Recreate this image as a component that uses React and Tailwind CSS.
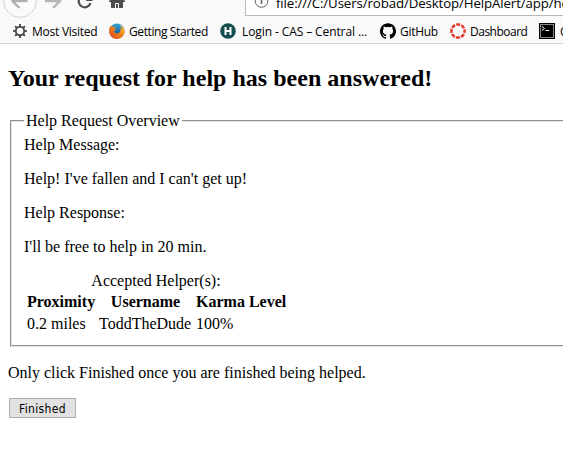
import { SiGithub } from 'react-icons/si';

function GearIcon() {
  return (
    <svg className="h-4 w-4 shrink-0" viewBox="0 0 16 16" fill="none" stroke="#4c4c4c">
      <circle cx="8" cy="8" r="4.2" strokeWidth="1.9" />
      {[0, 45, 90, 135, 180, 225, 270, 315].map((a) => (
        <path key={a} d="M8 1.1V3.8" strokeWidth="1.9" transform={`rotate(${a} 8 8)`} />
      ))}
    </svg>
  );
}

function FirefoxIcon() {
  return (
    <svg className="h-4 w-4 shrink-0" viewBox="0 0 16 16">
      <defs>
        <linearGradient id="fox" x1="0" y1="1" x2="1" y2="0">
          <stop offset="0" stopColor="#d9431e" />
          <stop offset="0.55" stopColor="#f0821c" />
          <stop offset="1" stopColor="#ffd23c" />
        </linearGradient>
        <linearGradient id="globe" x1="0" y1="0" x2="0" y2="1">
          <stop offset="0" stopColor="#2fa4dc" />
          <stop offset="1" stopColor="#173f80" />
        </linearGradient>
      </defs>
      <circle cx="8" cy="8" r="7.6" fill="url(#globe)" />
      <path d="M1 3C2 3 3 3.4 3.8 4C5 3.6 6 3.9 6.7 4.2L5.6 5.6L7 6.3L5.3 7.5C5 9.3 6.4 10.7 8.5 10.4C11 10 12 8 11.2 5.6C12.1 6 12.4 6.8 12.6 7.4C12.8 5 12 3.5 10.6 2C14 3 15.8 5.8 15.7 8.6C15.5 12.7 12.2 15.9 8 15.9C3.6 15.9.2 12.6.2 8.4C.2 6 .6 4.6 1 3Z" fill="url(#fox)" />
    </svg>
  );
}

function LoginIcon() {
  return (
    <svg className="h-4 w-4 shrink-0" viewBox="0 0 16 16">
      <circle cx="8" cy="8" r="7.8" fill="#174f50" />
      <path d="M5.5 4V12M10.5 4V12M5.5 8H10.5" stroke="white" strokeWidth="2" />
    </svg>
  );
}

function DashboardIcon() {
  return (
    <svg className="h-4 w-4 shrink-0" viewBox="0 0 16 16" fill="none">
      <circle cx="8" cy="8" r="6.6" stroke="#e5382e" strokeWidth="2.5" strokeDasharray="4 1.184" strokeDashoffset="2" />
    </svg>
  );
}

function TerminalIcon() {
  return (
    <svg className="h-4 w-4 shrink-0" viewBox="0 0 16 16" fill="none">
      <rect width="16" height="16" fill="black" />
      <rect x="1.5" y="1.5" width="13" height="13" stroke="#888" />
      <path d="M3 3.5L5.5 5.5L3 7.5M6.5 7.5H10" stroke="white" />
    </svg>
  );
}

function NavIcons() {
  return (
    <svg className="h-[18px] w-[130px] shrink-0" viewBox="0 0 130 18" fill="none">
      <circle cx="20" cy="1" r="16.3" fill="#fbfbfb" stroke="#d2d2d2" />
      <path d="M12.5 1H27.5M19.5 -6L12.5 1L19.5 8" stroke="#b0b0b0" strokeWidth="2.4" />
      <path d="M45 1H60M53 -6L60 1L53 8" stroke="#b5b5b5" strokeWidth="2.4" />
      <path d="M90.5 3A6 6 0 1 1 89 -3" stroke="#4c4c4c" strokeWidth="2.2" />
      <path d="M85.5 1H92.5V-5Z" fill="#4c4c4c" />
      <path d="M109 1L117 -7L125 1V2H123V8H119V3H115V8H111V2H109Z" fill="#4c4c4c" />
      <path d="M116 4H118V8H116Z" fill="#4c4c4c" />
    </svg>
  );
}

function Bookmark({ icon, label, className, text }) {
  return (
    <div className={`flex shrink-0 items-center gap-1 ${className}`}>
      {icon}
      <span className={`whitespace-nowrap pt-0.5 ${text}`}>{label}</span>
    </div>
  );
}

function BrowserChrome() {
  return (
    <header className="h-[44px] overflow-hidden border-b border-[#d9d9d9] bg-[#f9f9f9] font-['Open_Sans','Noto_Sans',sans-serif] text-[12px] leading-4 text-black">
      <div className="flex h-[18px] items-start justify-between overflow-hidden">
        <NavIcons />
        <div className="flex h-4 w-[318px] shrink-0 items-start overflow-hidden border-b border-l border-[#b9b9b9] bg-white">
          <svg className="ml-[7px] h-4 w-4 shrink-0" viewBox="0 0 16 16" fill="none">
            <circle cx="8.5" cy="1" r="6.3" stroke="#666" />
            <path d="M8.5 0V4" stroke="#666" strokeWidth="1.6" />
          </svg>
          <span className="-mt-[5px] ml-[7px] whitespace-nowrap text-[13.3px] leading-4 tracking-[-0.13px]">
            file:///C:/Users/robad/Desktop/HelpAlert/app/he
          </span>
        </div>
      </div>
      <nav className="flex h-[25px] items-center pl-3">
        <Bookmark icon={<GearIcon />} label="Most Visited" className="w-[97px]" text="tracking-[-0.25px]" />
        <Bookmark icon={<FirefoxIcon />} label="Getting Started" className="w-[111px]" text="tracking-[-0.4px]" />
        <Bookmark icon={<LoginIcon />} label="Login - CAS – Central ..." className="w-[160px]" text="ml-0.5 tracking-[-0.1px]" />
        <Bookmark icon={<SiGithub className="h-4 w-4 shrink-0" />} label="GitHub" className="w-[70px]" text="tracking-[-0.3px]" />
        <Bookmark icon={<DashboardIcon />} label="Dashboard" className="w-[89px]" text="tracking-[-0.5px]" />
        <Bookmark icon={<TerminalIcon />} label="C" className="" text="ml-px" />
      </nav>
    </header>
  );
}

export default function App() {
  return (
    <div className="h-[467px] w-[563px] overflow-hidden bg-white font-['Liberation_Serif',serif] text-[16px] leading-[18px] text-black">
      <BrowserChrome />
      <main className="pl-2 pt-[21px]">
        <h2 className="whitespace-nowrap text-[24px] font-bold leading-[27px] tracking-[0.02px]">Your request for help has been answered!</h2>
        <fieldset className="ml-0.5 mt-5 h-[235px] border-2 border-r-0 border-[#e5e5e5] pl-3 [border-style:groove]">
          <legend className="px-0.5">Help Request Overview</legend>
          <div className="flex flex-col gap-4 whitespace-nowrap pt-1.5">
            <p>Help Message:</p>
            <p>Help! I've fallen and I can't get up!</p>
            <p>Help Response:</p>
            <p>I'll be free to help in 20 min.</p>
            <table className="w-[266px] table-fixed border-separate border-spacing-0.5">
              <caption className="pr-0.5 leading-[18px]">Accepted Helper(s):</caption>
              <colgroup>
                <col className="w-[70px]" />
                <col className="w-[95px]" />
                <col />
              </colgroup>
              <thead>
                <tr>
                  <th className="p-px text-left font-bold">Proximity</th>
                  <th className="p-px text-center font-bold">Username</th>
                  <th className="p-px text-left font-bold">Karma Level</th>
                </tr>
              </thead>
              <tbody>
                <tr>
                  <td className="p-px">0.2 miles</td>
                  <td className="p-px">ToddTheDude</td>
                  <td className="p-px">100%</td>
                </tr>
              </tbody>
            </table>
          </div>
        </fieldset>
        <p className="mt-[17px]">Only click Finished once you are finished being helped.</p>
        <button className="ml-px mt-4 flex h-5 w-[67px] items-center justify-center border border-[#adadad] bg-[#e1e1e1] pt-px font-['DejaVu_Sans_Condensed','DejaVu_Sans',sans-serif] text-[12px] leading-4 tracking-[0.35px]">
          Finished
        </button>
      </main>
    </div>
  );
}
